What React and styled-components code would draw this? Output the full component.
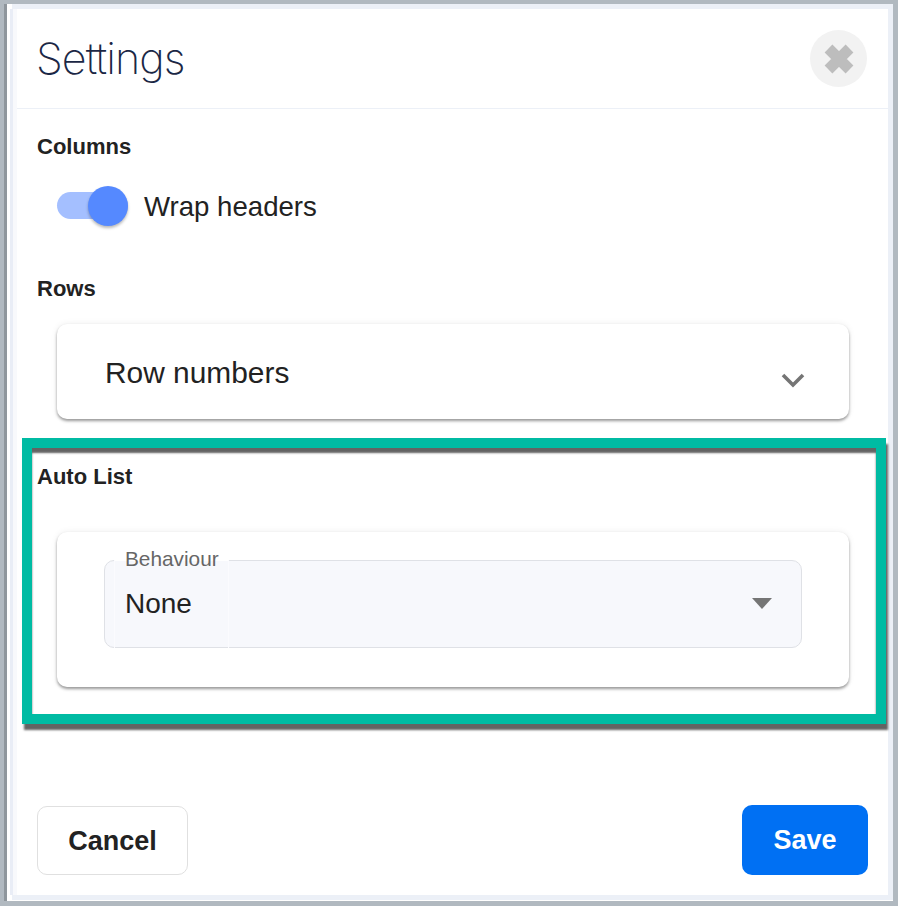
import React from "react";
import styled, { createGlobalStyle } from "styled-components";

const Global = createGlobalStyle`
  html, body { margin: 0; padding: 0; background: #b1b9c0; }
  * { box-sizing: border-box; }
`;
const Page = styled.div`
  width: 898px; height: 906px; padding: 4px 5px 5px 4px; background: #b1b9c0;
  font-family: "Liberation Sans", Arial, sans-serif; color: #222;
`;
const Frame = styled.div`
  height: 100%; background: #fff; border-left: 3px solid #8f969c; padding: 5px 5px 6px 10px;
`;
const Panel = styled.div`
  height: 100%; background: #fff; display: flex; flex-direction: column;
  box-shadow: -4px 0 0 #f8f9fc, -7px 0 0 #e9edf6, 0 0 0 5px #ecf0f7;
`;
const Header = styled.header`
  height: 100px; flex: none; display: flex; align-items: center; justify-content: space-between;
  padding: 0 21px 0 19px; border-bottom: 1px solid #ecf0f7;
`;
const Title = styled.h1`
  margin: -2px 0 0; font: 200 43px/50px Inter, "Liberation Sans", sans-serif; letter-spacing: -0.9px; color: #1b2745;
`;
const CloseButton = styled.button`
  width: 57px; height: 57px; border-radius: 50%; border: 0; padding: 0; background: #f2f2f2;
  display: flex; align-items: center; justify-content: center;
`;
const Body = styled.div`
  flex: 1; padding: 0 20px;
`;
const Heading = styled.h2`
  margin: ${p => p.$top || 0}px 0 0; font: 700 22px/26px "Liberation Sans", Arial, sans-serif; color: #222;
`;
const ToggleRow = styled.div`
  display: flex; align-items: center; gap: 16px; margin: 24px 0 0 20px; height: 42px;
`;
const Toggle = styled.div`
  position: relative; width: 71px; height: 27px; border-radius: 14px; background: #a4bfff;
`;
const Knob = styled.span`
  position: absolute; right: 0; top: -6px; width: 40px; height: 40px; border-radius: 50%;
  background: #5589ff; box-shadow: 0 2px 3px rgba(0,0,0,.28);
`;
const ToggleLabel = styled.span`
  font: 400 27.6px/32px "Liberation Sans", Arial, sans-serif; color: #222; margin-top: 4px;
`;
const Card = styled.div`
  background: #fff; border-radius: 10px; margin-left: 20px; width: 792px;
  box-shadow: 0 2px 3px rgba(0,0,0,.38), 0 0 7px rgba(0,0,0,.07);
`;
const AccordionCard = styled(Card)`
  height: 95px; margin-top: 22px; padding: 0 44px 0 48px; display: flex; align-items: center; justify-content: space-between;
`;
const AccordionLabel = styled.span`
  font: 400 29.9px/34px "Liberation Sans", Arial, sans-serif; color: #222; margin-top: 3px;
`;
const Chevron = styled.svg`
  margin-top: 17px;
`;
const Highlight = styled.section`
  margin: 19px 0 0 -15px; width: 864px; height: 286px; border: 10px solid #00bba3; padding: 16px 5px 0;
  box-shadow: 2px 6px 2px rgba(60,60,60,.8), inset 0 5px 2px rgba(60,60,60,.8);
`;
const FormCard = styled(Card)`
  height: 155px; margin: 42px 0 0 20px; padding: 28px 47px;
`;
const Field = styled.div`
  position: relative; height: 88px; border: 1px solid #dfe1e6; border-radius: 10px; background: #f7f8fc;
  padding: 26px 29px 0 20px; display: flex; align-items: flex-start; justify-content: space-between;
`;
const Notch = styled.span`
  position: absolute; left: 9px; top: -1px; bottom: -1px; width: 115px;
  border-left: 1px solid #fbfbfe; border-right: 1px solid #fbfbfe;
  background: linear-gradient(#fff 1px, transparent 1px);
`;
const FieldLabel = styled.span`
  position: absolute; left: 20px; top: -14px; font: 400 20.8px/24px "Liberation Sans", Arial, sans-serif; color: #666;
`;
const FieldValue = styled.span`
  position: relative; font: 400 28px/34px "Liberation Sans", Arial, sans-serif; color: #222;
`;
const Caret = styled.svg`
  margin-top: 11px;
`;
const Footer = styled.footer`
  flex: none; display: flex; align-items: flex-end; justify-content: space-between; padding: 0 20px 20px;
`;
const Button = styled.button`
  height: ${p => p.$primary ? 70 : 69}px; width: ${p => p.$primary ? 126 : 151}px; border-radius: 10px;
  font: 700 27px/34px "Liberation Sans", Arial, sans-serif;
  background: ${p => p.$primary ? "#0070f3" : "#fff"};
  color: ${p => p.$primary ? "#fff" : "#222"};
  border: ${p => p.$primary ? "0" : "1px solid #e0e0e0"};
`;

export default function App() {
  return (
    <Page>
      <Global />
      <Frame>
        <Panel>
          <Header>
            <Title>Settings</Title>
            <CloseButton aria-label="Close">
              <svg width="30" height="30" viewBox="0 0 30 30"><path d="M4.5 4.5 25.5 25.5M25.5 4.5 4.5 25.5" fill="none" stroke="#bdbdbd" strokeWidth="11"/></svg>
            </CloseButton>
          </Header>
          <Body>
            <Heading $top={25}>Columns</Heading>
            <ToggleRow>
              <Toggle><Knob /></Toggle>
              <ToggleLabel>Wrap headers</ToggleLabel>
            </ToggleRow>
            <Heading $top={50}>Rows</Heading>
            <AccordionCard>
              <AccordionLabel>Row numbers</AccordionLabel>
              <Chevron width="24" height="16" viewBox="0 0 24 16"><path d="M2 3 12 13 22 3" fill="none" stroke="#757575" strokeWidth="3.6"/></Chevron>
            </AccordionCard>
            <Highlight>
              <Heading>Auto List</Heading>
              <FormCard>
                <Field>
                  <Notch />
                  <FieldLabel>Behaviour</FieldLabel>
                  <FieldValue>None</FieldValue>
                  <Caret width="20" height="11" viewBox="0 0 20 11"><path d="M0 0H20L10 11Z" fill="#757575"/></Caret>
                </Field>
              </FormCard>
            </Highlight>
          </Body>
          <Footer>
            <Button>Cancel</Button>
            <Button $primary>Save</Button>
          </Footer>
        </Panel>
      </Frame>
    </Page>
  );
}
